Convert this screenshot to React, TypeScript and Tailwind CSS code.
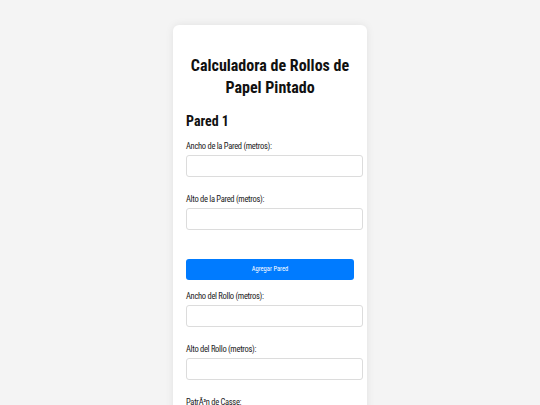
import React from "react";

function Field({ label, last = false }: { label: string; last?: boolean }) {
  return (
    <div className={last ? "mb-[29px]" : "mb-[17px]"}>
      <label className="block text-[8.5px] tracking-[-0.3px] leading-[11px] text-[#222] mb-[3px]">{label}</label>
      <input
        type="text"
        className="block w-[177px] h-[22px] border border-[#dcdcdc] rounded-[3px] bg-white outline-none"
      />
    </div>
  );
}

export default function App() {
  return (
    <div className="min-h-[405px] bg-[#f4f4f4] pt-[25px] overflow-hidden font-['Roboto_Condensed','Arial_Narrow',sans-serif]">
      <div className="mx-auto w-[194px] bg-white rounded-[6px] shadow-[0_0_8px_rgba(0,0,0,0.08)] px-[13px] pb-[40px]">
        <h1 className="pt-[30px] text-center text-[16px] leading-[22px] font-bold text-[#111] mb-[14px]">
          Calculadora de Rollos de Papel Pintado
        </h1>
        <h2 className="text-[14px] leading-[17px] font-bold text-[#111] mb-[11px]">Pared 1</h2>
        <Field label="Ancho de la Pared (metros):" />
        <Field label="Alto de la Pared (metros):" last />
        <button className="block w-[168px] h-[21px] rounded-[3px] bg-[#007bff] text-white text-[6.5px] mb-[11px]">
          Agregar Pared
        </button>
        <Field label="Ancho del Rollo (metros):" />
        <Field label="Alto del Rollo (metros):" />
        <Field label={"Patr\u00C3\u00B3n de Casse:"} />
      </div>
    </div>
  );
}
